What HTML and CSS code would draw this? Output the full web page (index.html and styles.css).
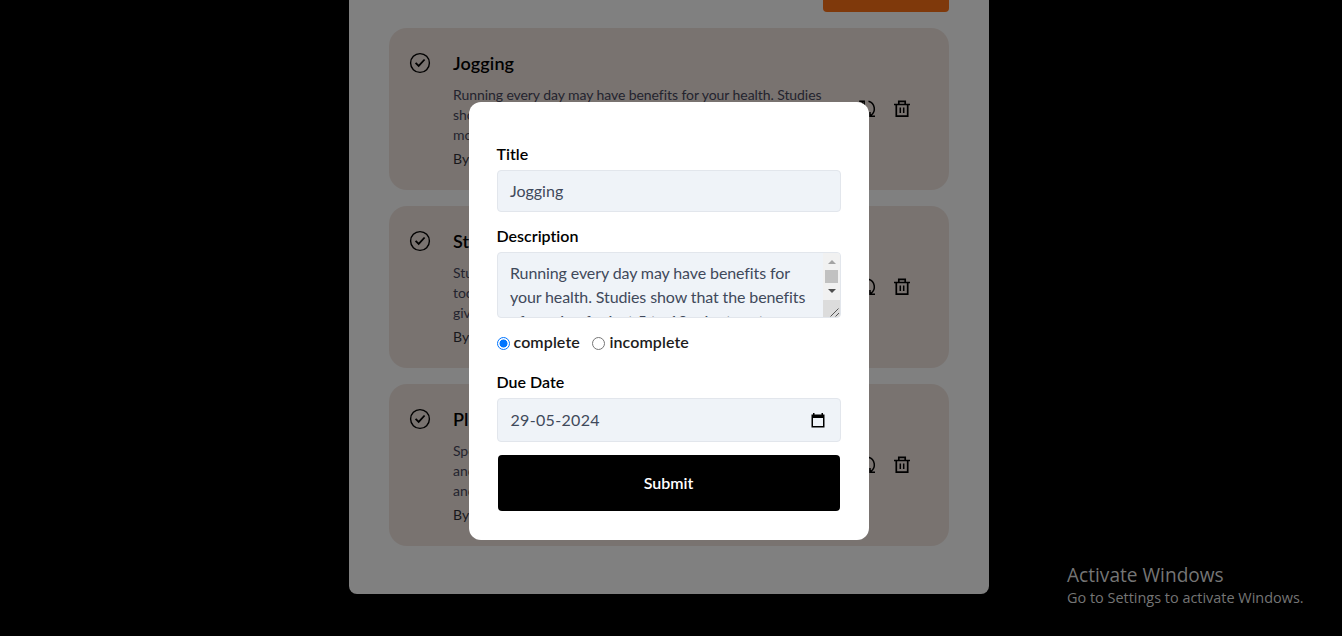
FILE: index.html
```html
<!DOCTYPE html>
<html lang="en">
<head>
<meta charset="utf-8">
<title>Tasks</title>
<link rel="stylesheet" href="styles.css">
</head>
<body>
<svg class="defs" width="0" height="0">
  <symbol id="check" viewBox="0 0 22 22"><circle cx="11" cy="11" r="9.4" fill="none" stroke="currentColor" stroke-width="1.4"/><path d="M6.600 10.800l3.100 3.100 5.900-6.400" fill="none" stroke="currentColor" stroke-width="1.800"/></symbol>
  <symbol id="sync" viewBox="0 0 20 20"><path d="M11.5 2.2a8 8 0 0 1 2.2 14.4M9 17.8A8 8 0 0 1 6 3.4M2.2 2.2h5v4.6M18 17.3h-5v-4.4" fill="none" stroke="currentColor" stroke-width="1.5"/></symbol>
  <symbol id="trash" viewBox="0 0 20 20"><path d="M2 5.5h16M4.3 5.5v11.7h11.4V5.5M6.8 5V2.4h6.400V5" fill="none" stroke="currentColor" stroke-width="1.7"/><path d="M8.3 8.500v5.400M11.700 8.500v5.400" stroke="currentColor" stroke-width="1.5"/></symbol>
</svg>
<main class="page">
  <div class="toolbar"><div class="add"></div></div>
  <article class="card">
    <svg class="check"><use href="#check"/></svg>
    <div class="body">
      <h2>Jogging</h2>
      <p class="text">Running every day may have benefits for your health. Studies<br>show that the benefits<br>moderate</p>
      <p class="by">By</p>
    </div>
    <div class="actions"><svg><use href="#sync"/></svg><svg><use href="#trash"/></svg></div>
  </article>
  <article class="card">
    <svg class="check"><use href="#check"/></svg>
    <div class="body">
      <h2>St</h2>
      <p class="text">Stu<br>too<br>give</p>
      <p class="by">By</p>
    </div>
    <div class="actions"><svg><use href="#sync"/></svg><svg><use href="#trash"/></svg></div>
  </article>
  <article class="card">
    <svg class="check"><use href="#check"/></svg>
    <div class="body">
      <h2>Pl</h2>
      <p class="text">Spe<br>and<br>and</p>
      <p class="by">By</p>
    </div>
    <div class="actions"><svg><use href="#sync"/></svg><svg><use href="#trash"/></svg></div>
  </article>
</main>
<div class="overlay">
  <form class="modal">
    <div class="label">Title</div>
    <div class="field title">Jogging</div>
    <div class="label second">Description</div>
    <div class="field area">
      <div class="area-text">Running every day may have benefits for<br>your health. Studies show that the benefits<br>of running for just 5 to 10 minutes at a</div>
      <div class="scroll">
        <svg width="18" height="66" viewBox="0 0 18 66"><rect width="18" height="66" fill="#f1f1f1"/><path d="M5 11l4-4 4 4z" fill="#a3a3a3"/><rect x="2" y="17" width="13" height="13" fill="#c1c1c1"/><path d="M5 36l4 4 4-4z" fill="#505050"/><rect y="47" width="18" height="19" fill="#dcdcdc"/><path d="M7.500 63.500l8-8M12.500 63.500l3.500-3.500" stroke="#555" stroke-width="1"/></svg>
      </div>
    </div>
    <div class="radios">
      <span class="radio on"></span><span>complete</span>
      <span class="radio off"></span><span>incomplete</span>
    </div>
    <div class="label">Due Date</div>
    <div class="field date"><span>29-05-2024</span>
      <svg width="14" height="15" viewBox="0 0 14 15"><path d="M.5 1.500h13v13H.5zM2 5v8h10V5z" fill="#000" fill-rule="evenodd"/><path d="M2 0h1.500v2H2zM10.500 0H12v2h-1.500z"/></svg>
    </div>
    <div class="submit">Submit</div>
  </form>
</div>
<aside class="watermark"><div class="wm-title">Activate Windows</div><div>Go to Settings to activate Windows.</div></aside>
</body>
</html>
```
FILE: styles.css
```css
* { box-sizing: border-box; }
body { margin: 0; height: 636px; overflow: hidden; background: #000; font-family: Lato, sans-serif; font-size: 16px; line-height: 24px; color: #000; font-variant-ligatures: none; }
.defs { display: block; }
h2, p { margin: 0; }
.page { width: 640px; height: 594px; margin: 0 auto 0 349px; padding: 0 40px; background: #808080; border-radius: 0 0 8px 8px; display: flex; flex-direction: column; gap: 16px; }
.toolbar { display: flex; justify-content: flex-end; height: 12px; }
.add { width: 126px; height: 12px; background: #7f390b; border-radius: 0 0 4px 4px; }
.card { height: 162px; flex: none; padding: 21px 37px 0 20px; background: #797370; border-radius: 18px; display: flex; }
.check { width: 22px; height: 22px; margin-top: 3px; flex: none; }
.body { margin-left: 22px; width: 376px; }
h2 { font-size: 18px; line-height: 28px; font-weight: 600; letter-spacing: 0.100px; }
.text { margin-top: 8px; font-size: 14px; line-height: 20px; letter-spacing: -0.070px; color: #23232e; white-space: nowrap; }
.by { margin-top: 4px; font-size: 14px; line-height: 20px; color: #18181c; }
.actions { display: flex; gap: 15px; margin: 50px 0 0 auto; }
.actions svg { width: 20px; height: 20px; }
.overlay { position: absolute; inset: 0; padding-top: 102px; }
.modal { width: 400px; height: 438px; margin-left: 469px; padding: 40px 28px 0; background: #fff; border-radius: 12px; }
.label { height: 28px; font-weight: 600; text-indent: -0.500px; }
.second { margin-top: 12px; }
.field { width: 344px; border: 1px solid #e2e6ec; border-radius: 4px; background: #eff3f8; color: #3f495b; }
.title { height: 42px; padding: 8px 12px; }
.area { height: 66px; display: flex; justify-content: space-between; overflow: hidden; }
.area-text { padding: 8px 0 0 12px; white-space: nowrap; letter-spacing: -0.110px; }
.scroll { width: 17px; height: 66px; flex: none; }
.radios { display: flex; align-items: center; height: 24px; margin: 12px 0 16px; font-weight: 600; letter-spacing: 0.100px; color: #1c1c1c; }
.radio { width: 13px; height: 13px; margin-right: 3.500px; border-radius: 50%; border: 1px solid #767676; margin-top: 2px; }
.radio.on { border-color: #0075ff; background: radial-gradient(circle, #0075ff 3.700px, #fff 4.300px); }
.radio.off { margin-left: 12px; margin-right: 4.500px; }
.date { height: 44px; padding: 0 15px 0 12.500px; display: flex; align-items: center; justify-content: space-between; letter-spacing: 0.330px; }
.submit { width: 342px; height: 56px; margin: 13px 1px 0; border-radius: 4px; background: #000; color: #fff; text-align: center; line-height: 56px; font-weight: 600; text-indent: -1px; }
.watermark { position: absolute; left: 1067px; top: 562px; color: #757575; font: 14.450px/20px "Open Sans", sans-serif; white-space: nowrap; }
.wm-title { font-size: 19.100px; line-height: 26px; }
```
